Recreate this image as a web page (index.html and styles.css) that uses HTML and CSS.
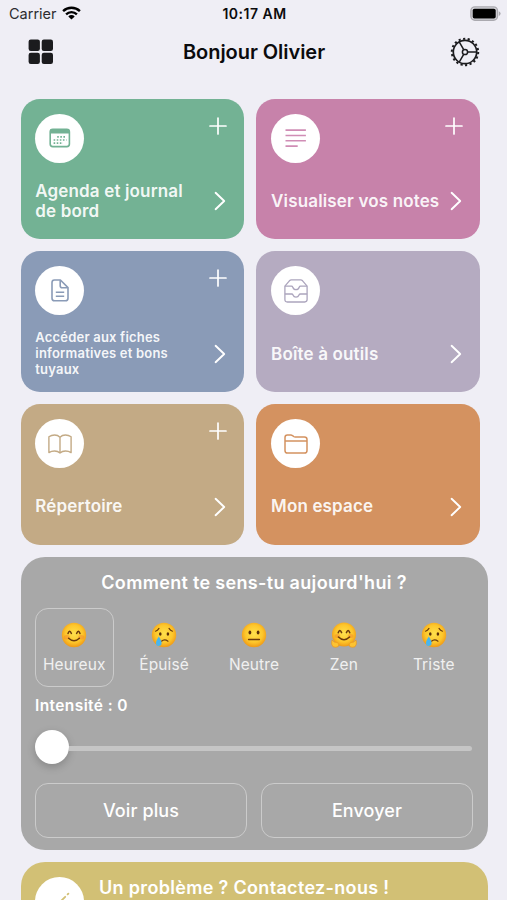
FILE: index.html
```html
<!DOCTYPE html>
<html lang="fr">
<head>
  <meta charset="UTF-8" />
  <meta name="viewport" content="width=device-width, initial-scale=1.0"/>
  <title>Bonjour Olivier</title>
  <link rel="stylesheet" href="styles.css">
</head>
<body>
  <!-- shared icons -->
  <svg class="defs" width="0" height="0">
    <defs>
      <radialGradient id="face" cx="50%" cy="45%" r="55%">
        <stop offset="0" stop-color="#ffe14d"/>
        <stop offset="0.65" stop-color="#fdc62b"/>
        <stop offset="1" stop-color="#f09a16"/>
      </radialGradient>
      <symbol id="plus" viewBox="0 0 18 18">
        <path d="M9 1v16M1 9h16" fill="none" stroke="currentColor" stroke-width="1.7" stroke-linecap="round"/>
      </symbol>
      <symbol id="chevron" viewBox="0 0 12 20">
        <path d="M1.6 1.8L10.2 10L1.6 18.2" fill="none" stroke="currentColor" stroke-width="1.9" stroke-linecap="round" stroke-linejoin="round"/>
      </symbol>
      <symbol id="sad" viewBox="0 0 26 26">
        <circle cx="13" cy="13" r="12.2" fill="url(#face)"/>
        <g fill="none" stroke="#6b3a0c" stroke-width="1.2" stroke-linecap="round">
          <path d="M4.5 9.2Q6.5 8.6 8 6.4M18 6.4Q19.5 8.6 21.5 9.2M10.5 19.2Q13.5 16.5 17 19.2"/>
        </g>
        <ellipse cx="9.3" cy="12" rx="1.3" ry="1.8" fill="#5c3009"/>
        <ellipse cx="16.9" cy="12" rx="1.3" ry="1.8" fill="#5c3009"/>
        <path d="M7.8 14.5Q10.6 18.8 10.6 21A2.8 3 0 0 1 5 21Q5 18.8 7.8 14.5Z" fill="#49b5ee"/>
      </symbol>
    </defs>
  </svg>

  <div class="status-bar">
    <div class="carrier">
      <span>Carrier</span>
      <svg width="19" height="14" viewBox="0 0 19 14">
        <g fill="none" stroke="#000" stroke-width="2.4">
          <path d="M1.1 5.2A12 12 0 0 1 17.9 5.2"/>
          <path d="M4.1 8.3A7.8 7.8 0 0 1 14.9 8.3"/>
        </g>
        <path d="M9.5 13.6L6.3 10.4A4.6 4.6 0 0 1 12.7 10.4Z"/>
      </svg>
    </div>
    <div class="time">10:17 AM</div>
    <svg class="battery" width="31" height="16" viewBox="0 0 31 16">
      <rect x="0.9" y="0.9" width="26.6" height="13.4" rx="4" fill="#d5d4da" stroke="#aaa9af" stroke-width="1.4"/>
      <rect x="2.7" y="2.7" width="23" height="9.8" rx="1.8"/>
      <path d="M28.8 5.2Q30.6 5.8 30.6 7.6Q30.6 9.4 28.8 10Z" fill="#aaa9af"/>
    </svg>
  </div>

  <header>
    <svg class="menu" width="26" height="26" viewBox="0 0 26 26" fill="#1b1b1e">
      <rect x="0.6" y="0.6" width="11.3" height="11.3" rx="2.2"/>
      <rect x="13.7" y="0.6" width="11.3" height="11.3" rx="2.2"/>
      <rect x="0.6" y="13.7" width="11.3" height="11.3" rx="2.2"/>
      <rect x="13.7" y="13.7" width="11.3" height="11.3" rx="2.2"/>
    </svg>
    <h1>Bonjour Olivier</h1>
    <svg class="settings" width="30" height="30" viewBox="0 0 30 30" fill="none" stroke="#1b1b1e">
      <circle cx="15" cy="15" r="13.2" stroke-width="2" stroke-dasharray="2.15 2.457"/>
      <circle cx="15" cy="15" r="11.7" stroke-width="1.7"/>
      <circle cx="15" cy="15" r="2.6" stroke-width="1.5"/>
      <path d="M17.6 15H26.6M13.7 12.7L9.2 4.9M13.7 17.3L9.2 25.1" stroke-width="1.5"/>
    </svg>
  </header>

  <main>
    <div class="grid">
      <div class="card green">
        <div class="card-top">
          <div class="bubble">
            <svg width="22" height="20" viewBox="0 0 22 20">
              <rect x="1.2" y="1.2" width="19.2" height="17.4" rx="2.6" fill="none" stroke="currentColor" stroke-width="1.6"/>
              <path d="M1 5.6V3.4Q1 1 3.4 1H18.2Q20.6 1 20.6 3.4V5.6Z" fill="currentColor"/>
              <path d="M8.2 8.9H17.5M4.6 12H17.5M4.6 15.1H14" fill="none" stroke="currentColor" stroke-width="1.6" stroke-dasharray="1.6 1.5"/>
            </svg>
          </div>
          <svg class="plus"><use href="#plus"/></svg>
        </div>
        <div class="card-bottom">
          <span>Agenda et journal<br>de bord</span>
          <svg class="chevron"><use href="#chevron"/></svg>
        </div>
      </div>

      <div class="card pink">
        <div class="card-top">
          <div class="bubble">
            <svg width="22" height="20" viewBox="0 0 22 20">
              <path d="M0.5 2.1H20.9M0.5 7.5H20.9M0.5 12.8H20.9M0.5 18.1H12.7" fill="none" stroke="currentColor" stroke-width="1.6"/>
            </svg>
          </div>
          <svg class="plus"><use href="#plus"/></svg>
        </div>
        <div class="card-bottom">
          <span>Visualiser vos notes</span>
          <svg class="chevron"><use href="#chevron"/></svg>
        </div>
      </div>

      <div class="card blue">
        <div class="card-top">
          <div class="bubble">
            <svg width="18" height="23" viewBox="0 0 18 23" fill="none" stroke="currentColor" stroke-width="1.6" stroke-linejoin="round">
              <path d="M3.4 1H9.4L17 8.6V19.2Q17 21.8 14.4 21.8H3.6Q1 21.8 1 19.2V3.6Q1 1 3.4 1Z"/>
              <path d="M9.2 1.2V6.8Q9.2 8.8 11.2 8.8H16.8M4.8 13.2H13.2M4.8 17.2H13.2"/>
            </svg>
          </div>
          <svg class="plus"><use href="#plus"/></svg>
        </div>
        <div class="card-bottom small">
          <span>Accéder aux fiches<br>informatives et bons<br>tuyaux</span>
          <svg class="chevron"><use href="#chevron"/></svg>
        </div>
      </div>

      <div class="card purple">
        <div class="card-top">
          <div class="bubble">
            <svg width="24" height="24" viewBox="0 0 24 24" fill="none" stroke="currentColor" stroke-width="1.3" stroke-linejoin="round">
              <path d="M0.9 7.2L5.4 1.8Q6.2 0.9 7.4 0.9H16.6Q17.8 0.9 18.6 1.8L23.1 7.2V20.6Q23.1 23 20.7 23H3.3Q0.9 23 0.9 20.6Z"/>
              <path d="M0.9 7.2H7.4Q8.4 7.2 8.8 8.2Q9.6 10.6 12 10.6Q14.4 10.6 15.2 8.2Q15.6 7.2 16.6 7.2H23.1"/>
              <path d="M0.9 15H7.6Q8.6 15 9 16Q9.8 18.2 12 18.2Q14.2 18.2 15 16Q15.4 15 16.4 15H23.1"/>
            </svg>
          </div>
        </div>
        <div class="card-bottom">
          <span>Boîte à outils</span>
          <svg class="chevron"><use href="#chevron"/></svg>
        </div>
      </div>

      <div class="card sand">
        <div class="card-top">
          <div class="bubble">
            <svg width="24" height="20" viewBox="0 0 24 20" fill="none" stroke="currentColor" stroke-width="1.4" stroke-linejoin="round" stroke-linecap="round">
              <path d="M12 3.2Q9.8 1 6.6 1Q3.4 1 0.9 2.8V18.6Q3.4 17 6.6 17Q9.8 17 12 19Q14.2 17 17.4 17Q20.6 17 23.1 18.6V2.8Q20.6 1 17.4 1Q14.2 1 12 3.2V19"/>
            </svg>
          </div>
          <svg class="plus"><use href="#plus"/></svg>
        </div>
        <div class="card-bottom">
          <span>Répertoire</span>
          <svg class="chevron"><use href="#chevron"/></svg>
        </div>
      </div>

      <div class="card orange">
        <div class="card-top">
          <div class="bubble">
            <svg width="24" height="20" viewBox="0 0 24 20" fill="none" stroke="currentColor" stroke-width="1.5" stroke-linejoin="round">
              <path d="M1 16.4V3.4Q1 1 3.4 1H6.8Q7.8 1 8.6 1.7L9.6 2.5Q10.4 3.1 11.4 3.1H20.4Q23 3.1 23 5.6V16.4Q23 19 20.4 19H3.6Q1 19 1 16.4ZM1 7H23"/>
            </svg>
          </div>
        </div>
        <div class="card-bottom">
          <span>Mon espace</span>
          <svg class="chevron"><use href="#chevron"/></svg>
        </div>
      </div>
    </div>

    <section class="mood">
      <h2>Comment te sens-tu aujourd'hui ?</h2>
      <div class="mood-list">
        <div class="mood-item selected">
          <svg class="emoji" viewBox="0 0 26 26">
            <circle cx="13" cy="13" r="12.2" fill="url(#face)"/>
            <ellipse cx="5.8" cy="15.3" rx="3" ry="2.2" fill="#f58a2c" opacity="0.5"/>
            <ellipse cx="20.2" cy="15.3" rx="3" ry="2.2" fill="#f58a2c" opacity="0.5"/>
            <path d="M7 11.6Q8.6 6.8 10.4 11.4M15.6 11.4Q17.4 6.8 19 11.6M7.6 16.2Q13 21.2 18.4 16.2" fill="none" stroke="#6b3a0c" stroke-width="1.5" stroke-linecap="round"/>
          </svg>
          <span>Heureux</span>
        </div>
        <div class="mood-item">
          <svg class="emoji"><use href="#sad"/></svg>
          <span>Épuisé</span>
        </div>
        <div class="mood-item">
          <svg class="emoji" viewBox="0 0 26 26">
            <circle cx="13" cy="13" r="12.2" fill="url(#face)"/>
            <ellipse cx="8.9" cy="10.6" rx="1.4" ry="2" fill="#5c3009"/>
            <ellipse cx="17.1" cy="10.6" rx="1.4" ry="2" fill="#5c3009"/>
            <path d="M7.6 17.4H18.4" stroke="#6b3a0c" stroke-width="1.5" stroke-linecap="round"/>
          </svg>
          <span>Neutre</span>
        </div>
        <div class="mood-item">
          <svg class="emoji" viewBox="0 0 26 26">
            <circle cx="13" cy="12.6" r="12" fill="url(#face)"/>
            <ellipse cx="6.4" cy="14" rx="2.8" ry="2" fill="#f58a2c" opacity="0.5"/>
            <ellipse cx="19.6" cy="14" rx="2.8" ry="2" fill="#f58a2c" opacity="0.5"/>
            <path d="M7.2 10.8Q8.8 6.2 10.6 10.6M15.4 10.6Q17.2 6.2 18.8 10.8M7.4 15Q13 20.4 18.6 15" fill="none" stroke="#6b3a0c" stroke-width="1.5" stroke-linecap="round"/>
            <path d="M0.8 18.4Q2.2 18 3 20L6.6 20.6Q8.4 22.2 7.4 24.4Q5 26 2 24.8Q-0.2 22.6 0.8 18.4Z" fill="#fdc332" stroke="#e8901c" stroke-width="0.6"/>
            <path d="M25.2 18.4Q23.8 18 23 20L19.4 20.6Q17.6 22.2 18.6 24.4Q21 26 24 24.8Q26.2 22.6 25.2 18.4Z" fill="#fdc332" stroke="#e8901c" stroke-width="0.6"/>
          </svg>
          <span>Zen</span>
        </div>
        <div class="mood-item">
          <svg class="emoji"><use href="#sad"/></svg>
          <span>Triste</span>
        </div>
      </div>
      <div class="intensity">Intensité : 0</div>
      <div class="slider">
        <div class="thumb"></div>
        <div class="track"></div>
      </div>
      <div class="actions">
        <button>Voir plus</button>
        <button>Envoyer</button>
      </div>
    </section>

    <section class="contact">
      <div class="bubble">
        <svg width="24" height="24" viewBox="0 0 24 24" fill="none" stroke="currentColor" stroke-width="1.8" stroke-linecap="round" stroke-linejoin="round">
          <path d="M17.2 6.8L7 17L3.4 20.6L5 16"/>
          <path d="M19.6 4.4L20.4 3.6"/>
        </svg>
      </div>
      <h2>Un problème ? Contactez-nous !</h2>
    </section>
  </main>
</body>
</html>
```

FILE: styles.css
```css
:root {
  --bg-color: #efeef5;
  --text-color: #0b0b0d;
  --line-color: #cbcbcb;
}

* {
  box-sizing: border-box;
}

body {
  margin: 0;
  height: 900px;
  overflow: hidden;
  font-family: Inter, "Liberation Sans", sans-serif;
  background: var(--bg-color);
  color: var(--text-color);
}

svg {
  display: block;
  flex-shrink: 0;
}

.defs {
  position: absolute;
}

.status-bar {
  display: grid;
  grid-template-columns: 1fr auto 1fr;
  align-items: center;
  height: 27px;
  padding: 0 6px 0 8px;
}

.carrier {
  display: flex;
  align-items: center;
  gap: 5px;
  padding-left: 1px;
  font-size: 14.5px;
  color: #2c2c2f;
}

.carrier svg {
  margin-top: -2px;
}

.time {
  font-size: 14px;
  font-weight: 600;
  letter-spacing: 0.5px;
}

.battery {
  justify-self: end;
}

header {
  display: grid;
  grid-template-columns: 1fr auto 1fr;
  align-items: center;
  height: 50px;
  padding: 0 27px 0 28px;
}

h1 {
  margin: 0;
  font-size: 20px;
  font-weight: 600;
  letter-spacing: -0.05px;
}

.settings {
  justify-self: end;
}

main {
  padding: 21.5px 19.5px 0 20.5px;
}

.grid {
  display: grid;
  grid-template-columns: 223.5px 223.5px;
  grid-auto-rows: 140.5px;
  gap: 12.3px;
}

.card {
  padding: 15px 15px 15px 14.8px;
  border-radius: 19px;
  color: #fff;
}

.green { background: #73b294; }
.pink { background: #c782aa; }
.blue { background: #8a9bb7; }
.purple { background: #b5abc1; }
.sand { background: #c3aa85; }
.orange { background: #d49260; }

.green .bubble { color: #73b294; }
.pink .bubble { color: #d08db5; }
.blue .bubble { color: #8a9bb7; }
.purple .bubble { color: #aca5bd; }
.sand .bubble { color: #c3aa85; }
.orange .bubble { color: #d49260; }

.card-top {
  display: flex;
  justify-content: space-between;
}

.bubble {
  display: flex;
  justify-content: center;
  align-items: center;
  flex-shrink: 0;
  width: 49px;
  height: 49px;
  border-radius: 50%;
  background: #fff;
}

.plus {
  width: 18px;
  height: 18px;
  margin: 3px 2px 0 0;
}

.card-bottom {
  display: flex;
  justify-content: space-between;
  align-items: center;
  height: 48px;
  margin-top: 14.5px;
  font-size: 17px;
  font-weight: 600;
  line-height: 20.5px;
  letter-spacing: 0.15px;
  white-space: nowrap;
  color: rgba(255, 255, 255, 0.93);
}

.card-bottom.small {
  font-size: 13px;
  line-height: 15.7px;
  letter-spacing: 0.2px;
}

.chevron {
  width: 12px;
  height: 20px;
  margin-right: 3px;
  color: #fff;
}

.mood {
  height: 293px;
  margin-top: 12.5px;
  padding: 15px 14.5px 0;
  border-radius: 24px;
  background: #a8a8a8;
  color: #fff;
}

h2 {
  margin: 0;
  font-size: 18px;
  font-weight: 600;
  line-height: 22px;
  letter-spacing: 0.32px;
  white-space: nowrap;
}

.mood h2 {
  text-align: center;
}

.mood-list {
  display: flex;
  justify-content: space-between;
  margin-top: 14px;
}

.mood-item {
  display: flex;
  flex-direction: column;
  align-items: center;
  gap: 7px;
  width: 78.5px;
  height: 79px;
  padding-top: 13px;
  border: 1.5px solid transparent;
  border-radius: 13px;
  font-size: 15.5px;
  line-height: 20px;
  letter-spacing: 0.1px;
  color: #f0f0f0;
}

.mood-item.selected {
  border-color: var(--line-color);
}

.emoji {
  width: 26px;
  height: 26px;
}

.intensity {
  margin-top: 9px;
  font-size: 15.5px;
  font-weight: 600;
  line-height: 20px;
  letter-spacing: 0.4px;
}

.slider {
  display: flex;
  align-items: center;
  height: 34px;
  margin-top: 14px;
}

.thumb {
  width: 34px;
  height: 34px;
  border-radius: 50%;
  background: #fff;
  box-shadow: 0 3px 8px rgba(0, 0, 0, 0.2);
}

.track {
  flex: 1;
  height: 5px;
  margin: 2px 1px 0 0;
  border-radius: 0 3px 3px 0;
  background: #c5c5c5;
}

.actions {
  display: flex;
  gap: 14px;
  margin-top: 19px;
}

button {
  flex: 1;
  height: 55px;
  border: 1.5px solid var(--line-color);
  border-radius: 13px;
  background: transparent;
  font-family: inherit;
  font-size: 18px;
  font-weight: 500;
  letter-spacing: 0.1px;
  color: #fff;
}

.contact {
  display: flex;
  gap: 15px;
  height: 120px;
  margin-top: 12px;
  padding: 15px 14.5px;
  border-radius: 24px;
  background: #d2c075;
  color: #fff;
}

.contact .bubble {
  color: #d2c075;
}
```
